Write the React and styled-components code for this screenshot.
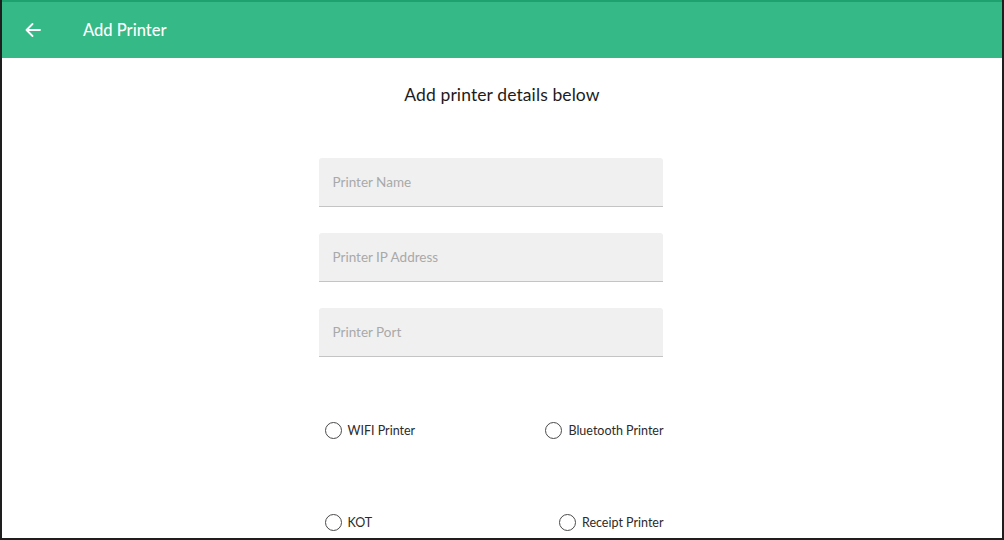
import React from "react";
import styled, { createGlobalStyle } from "styled-components";

const Global = createGlobalStyle`
  html, body { margin: 0; padding: 0; background: #fff; }
  body { font-family: Lato, "Open Sans", sans-serif; }
  * { box-sizing: border-box; }
`;

const Frame = styled.div`
  width: 1004px;
  height: 540px;
  border-left: 2px solid #1e1e1e;
  border-right: 2px solid #1e1e1e;
  border-bottom: 2px solid #1e1e1e;
  background: #fff;
  overflow: hidden;
  display: flex;
  flex-direction: column;
`;

const Header = styled.header`
  height: 58px;
  flex-shrink: 0;
  background: #34b987;
  border-top: 2px solid #1fa06f;
  display: flex;
  align-items: center;
  padding-left: 23px;
  color: #fff;
`;

const BackButton = styled.button`
  background: none;
  border: none;
  padding: 0;
  width: 16px;
  height: 16px;
  display: flex;
  align-items: center;
  justify-content: center;
  cursor: pointer;
  margin-right: 42px;
`;

const HeaderTitle = styled.h1`
  margin: 0;
  font-size: 16.5px;
  font-weight: 500;
`;

const Content = styled.main`
  display: flex;
  flex-direction: column;
  align-items: center;
`;

const Title = styled.h2`
  margin: 27px 0 0;
  font-size: 17.5px;
  line-height: 20px;
  font-weight: 400;
  color: #1c1c1c;
  letter-spacing: 0.1px;
`;

const Column = styled.div`
  width: 344px;
  margin-left: -23px;
  display: flex;
  flex-direction: column;
`;

const Form = styled.form`
  margin-top: 53px;
  display: flex;
  flex-direction: column;
  gap: 26px;
`;

const Field = styled.input`
  width: 100%;
  height: 49px;
  border: none;
  border-bottom: 1px solid #c4c4c4;
  border-radius: 3px 3px 0 0;
  background: #f0f0f0;
  padding: 0 14px;
  font-family: Lato, sans-serif;
  font-size: 13.5px;
  color: #333;
  outline: none;
  &::placeholder { color: #a9a9a9; }
`;

const RadioRow = styled.div`
  display: flex;
  justify-content: space-between;
  align-items: center;
  height: 20px;
  padding: 0 0 0 6px;
  margin-right: -1px;
  margin-top: ${(p) => p.$top}px;
`;

const RadioLabel = styled.label`
  display: flex;
  align-items: center;
  gap: 6px;
  font-size: 12.5px;
  color: #2b2b2b;
  cursor: pointer;
`;

const Circle = styled.span`
  width: 17px;
  height: 17px;
  border-radius: 50%;
  border: 1.6px solid #4a4a4a;
  display: inline-block;
`;

const Radio = ({ label }) => (
  <RadioLabel>
    <Circle />
    {label}
  </RadioLabel>
);

export default function App() {
  return (
    <>
      <Global />
      <Frame>
        <Header>
          <BackButton aria-label="Back">
            <svg width="16" height="14" viewBox="0 0 16 14" fill="none">
              <path d="M15 7H1.5M7.5 1L1.5 7l6 6" stroke="#fff" strokeWidth="1.8" strokeLinecap="round" strokeLinejoin="round" />
            </svg>
          </BackButton>
          <HeaderTitle>Add Printer</HeaderTitle>
        </Header>
        <Content>
          <Title>Add printer details below</Title>
          <Column>
            <Form>
              <Field placeholder="Printer Name" />
              <Field placeholder="Printer IP Address" />
              <Field placeholder="Printer Port" />
            </Form>
            <RadioRow $top={63}>
              <Radio label="WIFI Printer" />
              <Radio label="Bluetooth Printer" />
            </RadioRow>
            <RadioRow $top={72}>
              <Radio label="KOT" />
              <Radio label="Receipt Printer" />
            </RadioRow>
          </Column>
        </Content>
      </Frame>
    </>
  );
}
